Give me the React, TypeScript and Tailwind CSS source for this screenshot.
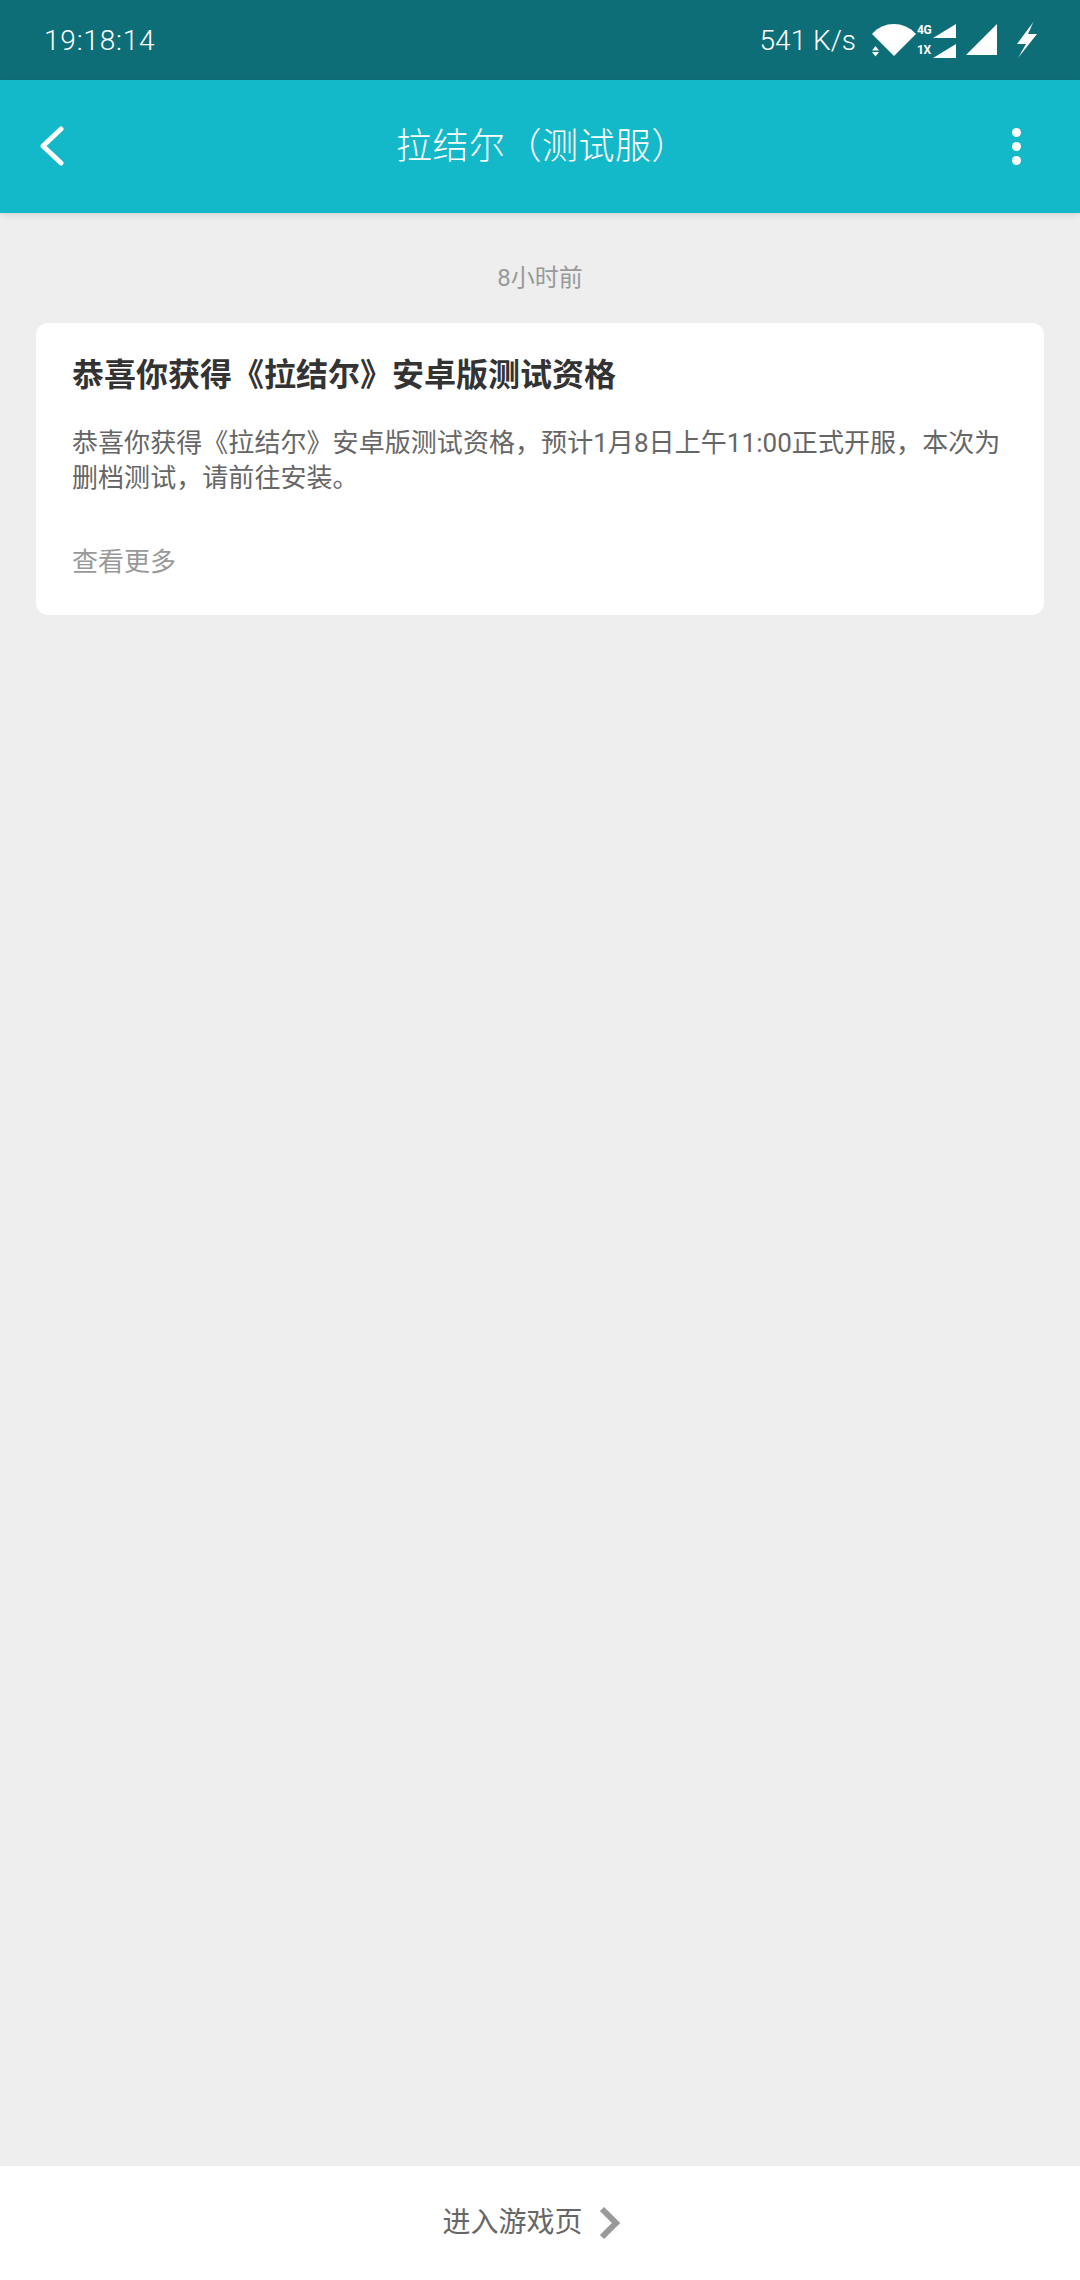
export default function App() {
  return (
    <div className="flex h-[2280px] w-[1080px] flex-col overflow-hidden bg-[#eeeeee] font-['Roboto','Noto_Sans_CJK_SC',sans-serif]">
      {/* Status bar */}
      <div className="flex h-20 shrink-0 items-center justify-between bg-[#0d6e78] pl-11 pr-[42px] text-white">
        <span className="pt-0.5 text-[28px] font-light leading-none tracking-[0.8px]">19:18:14</span>
        <div className="flex items-center">
          <span className="mr-[15px] pt-0.5 text-[28px] font-light leading-none">541 K/s</span>
          <svg width="46" height="36" viewBox="0 0 46 36" fill="white">
            <path d="M1 12 C12.5 -1.3 33 -1.3 45 12 L23 34 Z" />
            <path d="M4.5 24 L8 28.5 H1 Z M1 30 H8 L4.5 34.5 Z" />
          </svg>
          <div className="flex w-[39px] flex-col gap-[5px] text-[12px] font-bold leading-none">
            <div className="flex h-[15px] items-end justify-between">
              <span className="pb-0.5 tracking-[-0.3px]">4G</span>
              <svg width="23" height="15" viewBox="0 0 23 15" fill="white"><path d="M0 15 L23 1 V15 Z" /></svg>
            </div>
            <div className="flex h-[15px] items-end justify-between">
              <span className="pb-0.5 tracking-[-0.3px]">1X</span>
              <svg width="23" height="15" viewBox="0 0 23 15" fill="white"><path d="M0 15 L23 1 V15 Z" /></svg>
            </div>
          </div>
          <svg width="32" height="32" viewBox="0 0 32 32" fill="white" className="ml-[10px]"><path d="M0 31 L31 0 V31 Z" /></svg>
          <svg width="22" height="38" viewBox="0 0 22 38" className="ml-[18px]">
            <defs>
              <linearGradient id="bolt" x1="0" y1="0" x2="0" y2="1">
                <stop offset="0" stopColor="white" stopOpacity="0.4" />
                <stop offset="0.2" stopColor="white" />
                <stop offset="0.85" stopColor="white" />
                <stop offset="1" stopColor="white" stopOpacity="0.7" />
              </linearGradient>
            </defs>
            <path d="M18 0 L1 23 H10 L2 37 L21 13 H12 Z" fill="url(#bolt)" />
          </svg>
        </div>
      </div>

      {/* Header */}
      <div className="relative z-10 flex h-[133px] shrink-0 items-center justify-between bg-[#14b9c9] pl-10 pr-[59px] shadow-[0_2px_6px_rgba(0,0,0,0.12)]">
        <svg width="24" height="40" viewBox="0 0 24 40" fill="none" stroke="white" strokeWidth="5" strokeLinecap="round" strokeLinejoin="round" className="mb-0.5">
          <path d="M21 3 L3 20 L21 37" />
        </svg>
        <h1 className="pl-2 text-[36px] font-light leading-none tracking-[0.5px] text-white">拉结尔（测试服）</h1>
        <div className="flex flex-col gap-[5px]">
          <span className="h-[9px] w-[9px] rounded-full bg-white" />
          <span className="h-[9px] w-[9px] rounded-full bg-white" />
          <span className="h-[9px] w-[9px] rounded-full bg-white" />
        </div>
      </div>

      {/* Message list */}
      <div className="flex-1 px-9">
        <p className="mt-[49px] text-center text-[24px] leading-[32px] text-[#999999]">8小时前</p>
        <div className="mt-[29px] h-[292px] w-[1008px] rounded-xl bg-white px-9 pt-[30px]">
          <h2 className="text-[32px] font-bold leading-[44px] text-[#333333]">恭喜你获得《拉结尔》安卓版测试资格</h2>
          <p className="mt-[29px] text-[26px] leading-[35px] tracking-[0.06px] text-[#666666]">
            恭喜你获得《拉结尔》安卓版测试资格，预计1月8日上午11:00正式开服，本次为删档测试，请前往安装。
          </p>
          <p className="mt-[48px] text-[26px] leading-[36px] text-[#999999]">查看更多</p>
        </div>
      </div>

      {/* Bottom link */}
      <div className="flex h-[114px] shrink-0 items-center justify-center bg-white">
        <span className="text-[28px] leading-none text-[#666666]">进入游戏页</span>
        <svg width="24" height="34" viewBox="0 0 24 34" fill="none" stroke="#999999" strokeWidth="6" className="ml-[15px] mr-4">
          <path d="M4 3 L18 17 L4 31" />
        </svg>
      </div>
    </div>
  );
}
